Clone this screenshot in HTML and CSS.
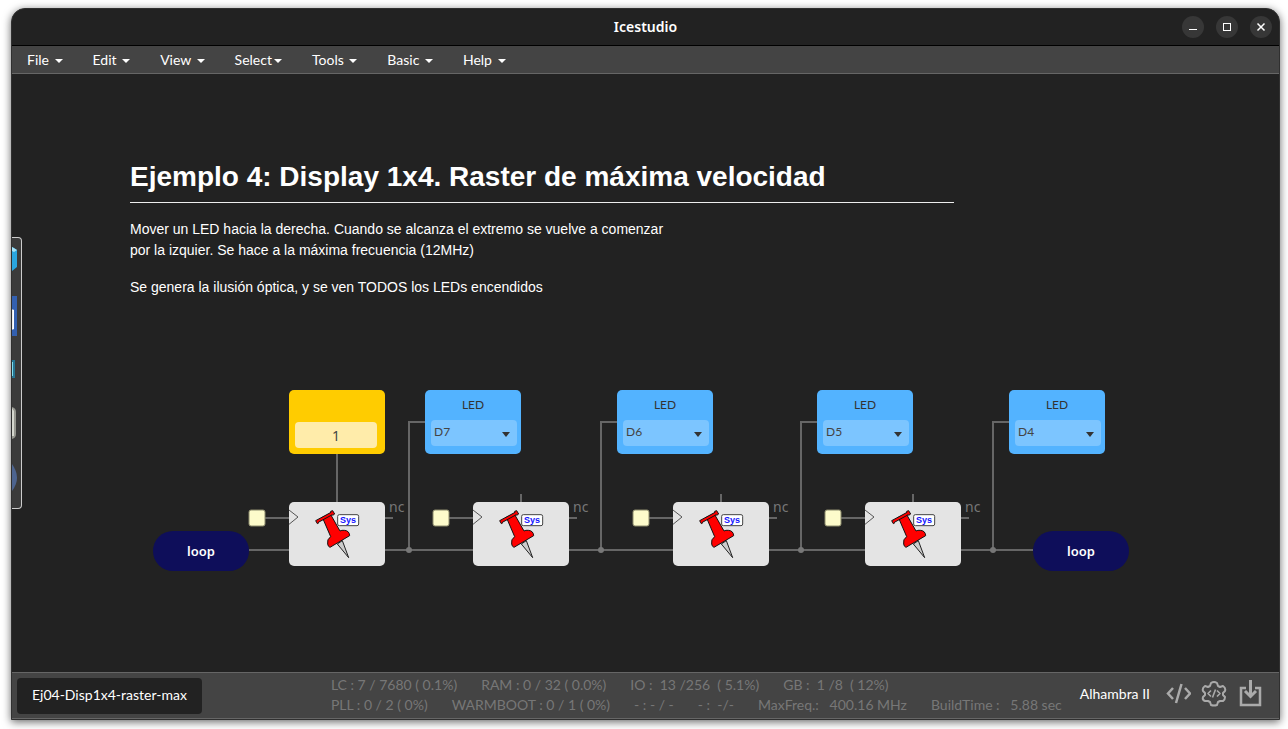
FILE: index.html
```html
<!DOCTYPE html>
<html lang="es">
<head>
<meta charset="utf-8">
<title>Icestudio</title>
<link rel="stylesheet" href="styles.css">
</head>
<body>
<svg class="defs" aria-hidden="true">
  <symbol id="pin" viewBox="0 0 288 192">
    <path d="M0 24L27 45L0 67" fill="none" stroke="#555" stroke-width="3"/>
    <path d="M145 126L179 167L160 116Z" fill="#ccc" stroke="#222" stroke-width="3" stroke-linejoin="round"/>
    <path d="M100 46L125 104Q113 112 116 126Q117 134 123 136L182 101Q181 86 166 85Q158 84 153 87L124 36Z" fill="#f00" stroke="#111" stroke-width="3" stroke-linejoin="round"/>
    <path d="M80 56L126 31L125 28L131 26L137 36L131 40L130 38L88 61L89 63L85 65Z" fill="#f00" stroke="#111" stroke-width="3" stroke-linejoin="round"/>
    <rect x="146" y="38" width="63" height="33" rx="5" fill="#fff" stroke="#444" stroke-width="3"/>
  </symbol>
</svg>
<div class="window">
  <header class="titlebar">
    <h1 class="app-title">Icestudio</h1>
    <div class="controls">
      <button aria-label="Minimizar"><svg width="22" height="22"><path d="M7 13.500H15" stroke="#fff"/></svg></button>
      <button aria-label="Maximizar"><svg width="22" height="22"><rect x="7.500" y="7.500" width="7" height="7" fill="none" stroke="#fff"/></svg></button>
      <button aria-label="Cerrar"><svg width="22" height="22"><path d="M7.500 7.500L14.500 14.500M14.500 7.500L7.500 14.500" stroke="#fff" stroke-width="1.500"/></svg></button>
    </div>
  </header>
  <nav class="menu">
    <button>File <span class="caret"></span></button>
    <button>Edit <span class="caret"></span></button>
    <button>View <span class="caret"></span></button>
    <button>Select<span class="caret"></span></button>
    <button>Tools <span class="caret"></span></button>
    <button>Basic <span class="caret"></span></button>
    <button>Help <span class="caret"></span></button>
  </nav>
  <main class="canvas">
    <article class="note">
      <h2>Ejemplo 4: Display 1x4. Raster de máxima velocidad</h2>
      <p>Mover un LED hacia la derecha. Cuando se alcanza el extremo se vuelve a comenzar<br>por la izquier. Se hace a la máxima frecuencia (12MHz)</p>
      <p>Se genera la ilusión óptica, y se ven TODOS los LEDs encendidos</p>
    </article>

    <svg class="wires" width="1140" height="520">
      <g fill="none" stroke="#666" stroke-width="2">
        <path d="M325 380V428M509 420V428M709 420V428M901 420V428"/>
        <path d="M237 476H277M373 476H461M557 476H661M757 476H853M949 476H1021"/>
        <path d="M397 476V348H413M589 476V348H605M789 476V348H805M981 476V348H997"/>
        <path d="M253 444H277M437 444H461M637 444H661M829 444H853"/>
        <path d="M373 444H381M557 444H565M757 444H765M949 444H957"/>
      </g>
      <g fill="#777"><circle cx="397" cy="476" r="3"/><circle cx="589" cy="476" r="3"/><circle cx="789" cy="476" r="3"/><circle cx="981" cy="476" r="3"/></g>
      <g class="nc"><text x="377" y="438">nc</text><text x="561" y="438">nc</text><text x="761" y="438">nc</text><text x="953" y="438">nc</text></g>
      <g fill="#fdfbcb" stroke="#8c8b6c"><rect x="237" y="436" width="16" height="16" rx="2"/><rect x="421" y="436" width="16" height="16" rx="2"/><rect x="621" y="436" width="16" height="16" rx="2"/><rect x="813" y="436" width="16" height="16" rx="2"/></g>
    </svg>

    <div class="node constant c1"><input type="text" value="1" aria-label="Constante"></div>
    <div class="node led c2"><label for="led7">LED</label><div class="pick"><select id="led7"><option>D7</option></select></div></div>
    <div class="node led c4"><label for="led6">LED</label><div class="pick"><select id="led6"><option>D6</option></select></div></div>
    <div class="node led c6"><label for="led5">LED</label><div class="pick"><select id="led5"><option>D5</option></select></div></div>
    <div class="node led c8"><label for="led4">LED</label><div class="pick"><select id="led4"><option>D4</option></select></div></div>

    <div class="node block c1"><svg><use href="#pin"/><text x="51" y="21" class="sys">Sys</text></svg></div>
    <div class="node block c3"><svg><use href="#pin"/><text x="51" y="21" class="sys">Sys</text></svg></div>
    <div class="node block c5"><svg><use href="#pin"/><text x="51" y="21" class="sys">Sys</text></svg></div>
    <div class="node block c7"><svg><use href="#pin"/><text x="51" y="21" class="sys">Sys</text></svg></div>
    <div class="node loop c0">loop</div>
    <div class="node loop c9">loop</div>

    <aside class="palette">
      <svg width="9" height="270">
        <path d="M0 9L2 10L5 12V29L0 33Z" fill="#2aa6e0"/><path d="M0 9L5 12L2 14L0 13Z" fill="#a5e3f8"/>
        <rect y="58" width="5" height="40" fill="#3360b0"/><path d="M0 72H1.500V91H0" fill="#eee" stroke="#fff"/>
        <path d="M0 123H2V139H0" fill="#7fdcef" stroke="#267490" stroke-width="2"/>
        <path d="M0 169Q4 170 4 174V196Q4 200 0 201Z" fill="#95968f"/><path d="M0 170L2 173V198H0" fill="#d5d7cf"/>
        <path d="M0 226Q10 240 0 253Z" fill="#4d648f"/>
      </svg>
    </aside>
  </main>
  <footer class="status">
    <button class="file">Ej04-Disp1x4-raster-max</button>
    <div class="stats">
      <div class="row"><span>LC : 7 / 7680 ( 0.1%)</span><span>RAM : 0 / 32 ( 0.0%)</span><span>IO :  13 /256  ( 5.1%)</span><span>GB :  1 /8  ( 12%)</span></div>
      <div class="row"><span>PLL : 0 / 2 ( 0%)</span><span>WARMBOOT : 0 / 1 ( 0%)</span><span>- : - / -</span><span>- :  -/-</span><span>MaxFreq.:   400.16 MHz</span><span>BuildTime :   5.88 sec</span></div>
    </div>
    <div class="tools">
      <button class="board">Alhambra II</button>
      <button aria-label="Verificar"><svg width="26" height="28" fill="none" stroke="#aaa" stroke-width="2.500"><path d="M8 8L3 13.500L8 19M20 8L25 13.500L20 19M16.500 4L11 23"/></svg></button>
      <button aria-label="Sintetizar"><svg width="26" height="28" fill="none" stroke="#aaa" stroke-width="2" stroke-linejoin="round"><path d="M10 3Q13 1 16 3L17 6L19 7L22 6Q25 8 24 11L22 13V15L24 17Q24 20 22 21L19 21L17 22L16 25Q13 26 10 25L9 22L7 21L4 21Q1 20 2 17L4 15V13L2 11Q1 8 4 6L7 7L9 6Z"/><path d="M10 10.500L7 13.500L10 16.500M16 10.500L19 13.500L16 16.500M14.500 9.500L11.500 17.500" stroke-width="1.600"/></svg></button>
      <button aria-label="Cargar"><svg width="26" height="28" fill="none" stroke="#aaa"><path d="M9 8H4V25H23V8H18" stroke-width="2.500"/><path d="M13.500 0V16M8 11L13.500 16.500L19 11" stroke-width="3"/></svg></button>
    </div>
  </footer>
</div>
</body>
</html>
```
FILE: styles.css
```css
* { box-sizing: border-box; }
body { display: flow-root; height: 100vh; margin: 0; overflow: hidden; background: #fff; font: 14px/20px Lato, sans-serif; color: #fff; }
button { padding: 0; border: 0; background: none; color: inherit; font: inherit; }
svg { display: block; }
.defs { position: absolute; width: 0; height: 0; }
.window {
  display: flex; flex-direction: column;
  height: calc(100vh - 17px); margin: 8px 8px 9px 11px;
  overflow: hidden; background: #222;
  border: 1px solid #303030; border-radius: 14px 14px 0 0;
  box-shadow: 0 2px 8px rgba(0, 0, 0, .6);
}

.titlebar { display: grid; grid-template-columns: 1fr auto 1fr; align-items: center; flex: none; height: 37px; border-bottom: 1px solid #000; }
.app-title { grid-column: 2; margin: 0; font: 600 14px/20px "Noto Sans", sans-serif; }
.controls { display: flex; justify-content: flex-end; gap: 12px; padding-right: 7px; }
.controls button { width: 22px; height: 22px; border-radius: 50%; background: #373737; }

.menu { display: flex; flex: none; height: 28px; background: #444; border-bottom: 1px solid #666; }
.menu button { padding: 0 15px; white-space: nowrap; }
.caret { display: inline-block; margin-left: 2px; vertical-align: middle; border: 4px solid transparent; border-top-color: #fff; border-bottom: 0; }

.canvas { position: relative; flex: 1; min-height: 0; }
.note { max-width: 942px; padding: 85px 0 0 118px; font: 14px/21px "Liberation Sans", Arial, sans-serif; }
.note h2 { margin: 0 0 16px; padding-bottom: 7px; border-bottom: 1px solid #eee; font-size: 28px; line-height: 36px; }
.note p { margin: 0 0 16px; }

.wires { position: absolute; left: 0; top: 0; }
.nc { fill: #777; font: 14px "Noto Sans", sans-serif; }
.node { position: absolute; width: 96px; height: 64px; border-radius: 5px; }
.c0 { left: 141px; }
.c1 { left: 277px; }
.c2 { left: 413px; }
.c3 { left: 461px; }
.c4 { left: 605px; }
.c5 { left: 661px; }
.c6 { left: 805px; }
.c7 { left: 853px; }
.c8 { left: 997px; }
.c9 { left: 1021px; }
.constant { top: 316px; padding: 32px 8px 6px 6px; background: #fc0; }
.constant input { display: block; width: 100%; height: 26px; padding: 0; border: 0; border-radius: 4px; background: #ffecaa; color: #444; font: 14px "Noto Sans", sans-serif; text-align: center; }
.led { top: 316px; padding: 0 4px 0 6px; background: #53b3ff; color: #333; font-size: 12px; }
.led label { display: block; height: 30px; padding-right: 2px; line-height: 30px; text-align: center; }
.pick { position: relative; }
.pick::after { content: ""; position: absolute; right: 7px; top: 12px; border: 4px solid transparent; border-top: 5px solid #333; border-bottom: 0; pointer-events: none; }
.pick select { display: block; appearance: none; width: 100%; height: 26px; padding: 0 3px 3px; border: 0; border-radius: 4px; background: #7cc5ff; color: #444; font: 12px Lato, sans-serif; }
.block { top: 428px; background: #e4e4e4; }
.block svg { width: 96px; height: 64px; }
.sys { fill: #11f; font: bold 9px "Liberation Sans", Arial, sans-serif; }
.loop { top: 457px; height: 40px; border-radius: 20px; background: #0e0e5a; font: 600 13px/40px "Noto Sans", sans-serif; text-align: center; }
.palette { position: absolute; left: 0; top: 163px; background: #3b3b3b; border: 1px solid #ccc; border-left: 0; border-radius: 0 4px 4px 0; }

.status { display: flex; align-items: center; flex: none; height: 47px; padding: 0 16px 0 5px; background: #444; border: solid #666; border-width: 1px 0; }
.file { height: 36px; padding: 0 15px 2px; border-radius: 4px; background: #222; }
.stats { margin-left: 129px; padding-bottom: 2px; color: #777; }
.row { display: flex; gap: 24px; }
.row span { white-space: pre; }
.tools { display: flex; align-items: center; gap: 10px; margin-left: auto; padding-bottom: 3px; }
.board { margin-right: 5px; }
```
